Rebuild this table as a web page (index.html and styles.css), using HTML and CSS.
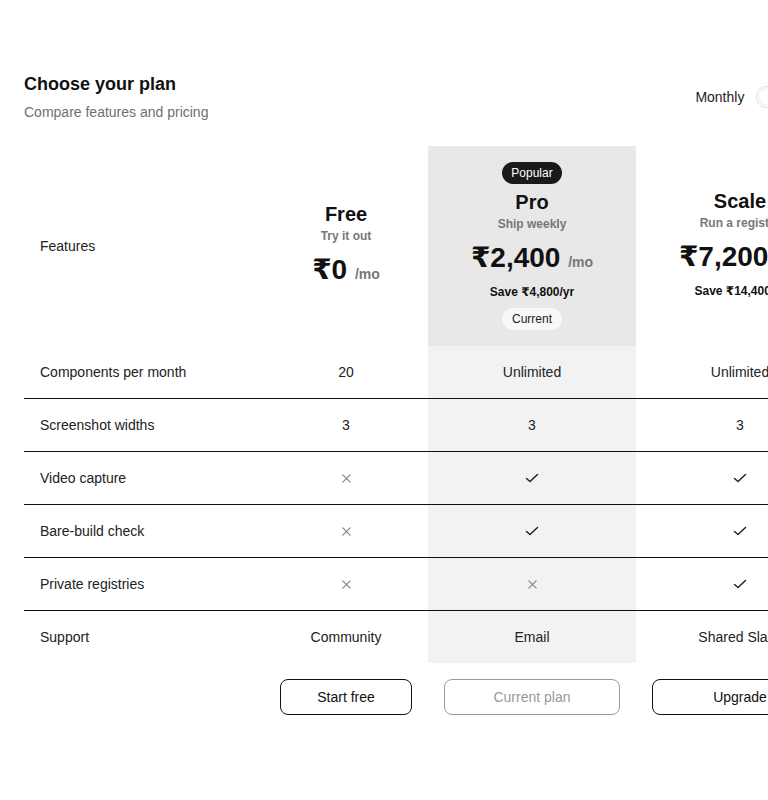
FILE: index.html
```html
<!DOCTYPE html>
<html lang="en">
<head>
<meta charset="utf-8">
<title>Choose your plan</title>
<link rel="stylesheet" href="styles.css">
</head>
<body>
<div class="viewport">
  <main class="page">
    <header class="head">
      <div class="head-text">
        <h1 class="title">Choose your plan</h1>
        <p class="subtitle">Compare features and pricing</p>
      </div>
      <div class="billing">
        <span class="billing-label">Monthly</span>
        <span class="toggle"><span class="knob"></span></span>
        <span class="billing-label">Annual</span>
      </div>
    </header>

    <div class="grid">
      <div class="cell feat head-cell">Features</div>
      <div class="cell plan plan-plain">
        <div class="plan-name">Free</div>
        <div class="plan-tag">Try it out</div>
        <div class="plan-price">₹0 <span class="per">/mo</span></div>
      </div>
      <div class="cell plan pro-head">
        <span class="badge">Popular</span>
        <div class="plan-name">Pro</div>
        <div class="plan-tag">Ship weekly</div>
        <div class="plan-price">₹2,400 <span class="per">/mo</span></div>
        <div class="save">Save ₹4,800/yr</div>
        <span class="current">Current</span>
      </div>
      <div class="cell plan plan-plain">
        <div class="plan-name">Scale</div>
        <div class="plan-tag">Run a registry</div>
        <div class="plan-price">₹7,200 <span class="per">/mo</span></div>
        <div class="save">Save ₹14,400/yr</div>
      </div>

      <div class="cell feat line">Components per month</div>
      <div class="cell val line">20</div>
      <div class="cell val line pro">Unlimited</div>
      <div class="cell val line">Unlimited</div>

      <div class="cell feat line">Screenshot widths</div>
      <div class="cell val line">3</div>
      <div class="cell val line pro">3</div>
      <div class="cell val line">3</div>

      <div class="cell feat line">Video capture</div>
      <div class="cell val line"><svg class="ico no" viewBox="0 0 12 12"><path d="M2 2L10 10M10 2L2 10"/></svg></div>
      <div class="cell val line pro"><svg class="ico yes" viewBox="0 0 14 12"><path d="M1.5 6.5L5 9.5L12.5 2.5"/></svg></div>
      <div class="cell val line"><svg class="ico yes" viewBox="0 0 14 12"><path d="M1.5 6.5L5 9.5L12.5 2.5"/></svg></div>

      <div class="cell feat line">Bare-build check</div>
      <div class="cell val line"><svg class="ico no" viewBox="0 0 12 12"><path d="M2 2L10 10M10 2L2 10"/></svg></div>
      <div class="cell val line pro"><svg class="ico yes" viewBox="0 0 14 12"><path d="M1.5 6.5L5 9.5L12.5 2.5"/></svg></div>
      <div class="cell val line"><svg class="ico yes" viewBox="0 0 14 12"><path d="M1.5 6.5L5 9.5L12.5 2.5"/></svg></div>

      <div class="cell feat line">Private registries</div>
      <div class="cell val line"><svg class="ico no" viewBox="0 0 12 12"><path d="M2 2L10 10M10 2L2 10"/></svg></div>
      <div class="cell val line pro"><svg class="ico no" viewBox="0 0 12 12"><path d="M2 2L10 10M10 2L2 10"/></svg></div>
      <div class="cell val line"><svg class="ico yes" viewBox="0 0 14 12"><path d="M1.5 6.5L5 9.5L12.5 2.5"/></svg></div>

      <div class="cell feat">Support</div>
      <div class="cell val">Community</div>
      <div class="cell val pro">Email</div>
      <div class="cell val">Shared Slack</div>

      <div class="cell"></div>
      <div class="cell btn-cell"><button class="btn">Start free</button></div>
      <div class="cell btn-cell"><button class="btn btn-disabled" disabled>Current plan</button></div>
      <div class="cell btn-cell"><button class="btn">Upgrade</button></div>
    </div>
  </main>
</div>
</body>
</html>
```

FILE: styles.css
```css
html, body {
  margin: 0;
  padding: 0;
  background: #ffffff;
}
body {
  font-family: "Liberation Sans", Arial, "DejaVu Sans", sans-serif;
  color: #111111;
}
.viewport {
  width: 768px;
  overflow: hidden;
}
.page {
  width: 826px;
  padding: 73px 0 60px 24px;
}
.head {
  display: flex;
  justify-content: space-between;
  align-items: center;
}
.title {
  margin: 0;
  font-size: 18px;
  line-height: 22px;
  font-weight: 700;
  color: #111111;
}
.subtitle {
  margin: 8px 0 0;
  font-size: 14px;
  line-height: 18px;
  color: #6f6f6f;
}
.billing {
  display: flex;
  align-items: center;
  gap: 12px;
  font-size: 14px;
  color: #222222;
}
.toggle {
  width: 36px;
  height: 20px;
  border: 1px solid #e4e4e4;
  border-radius: 10px;
  background: #fafafa;
  position: relative;
}
.knob {
  position: absolute;
  left: 2px;
  top: 2px;
  width: 16px;
  height: 16px;
  border-radius: 50%;
  background: #ffffff;
  box-shadow: 0 0 1px rgba(0,0,0,0.2);
}
.grid {
  margin-top: 25px;
  display: grid;
  grid-template-columns: 240px 164px 208px 208px;
  grid-template-rows: 200px repeat(5, 53px) 52px auto;
}
.cell {
  display: flex;
  align-items: center;
  justify-content: center;
  font-size: 14px;
  color: #222222;
}
.feat {
  justify-content: flex-start;
  padding-left: 16px;
}
.line {
  border-bottom: 1px solid #111111;
}
.plan {
  flex-direction: column;
}
.plan-plain {
  padding-bottom: 4px;
}
.pro-head {
  background: #e8e8e8;
}
.pro {
  background: #f2f2f2;
}
.badge {
  background: #1a1a1a;
  color: #ffffff;
  font-size: 12px;
  line-height: 22px;
  height: 22px;
  padding: 0 9px;
  border-radius: 11px;
  margin-bottom: 6px;
}
.plan-name {
  font-size: 20px;
  line-height: 24px;
  height: 24px;
  font-weight: 700;
  color: #111111;
}
.plan-tag {
  margin-top: 2px;
  font-size: 12px;
  line-height: 16px;
  height: 16px;
  font-weight: 700;
  color: #777777;
}
.plan-price {
  margin-top: 9px;
  font-size: 28px;
  line-height: 34px;
  height: 34px;
  font-weight: 700;
  color: #111111;
  white-space: nowrap;
}
.per {
  font-size: 14px;
  font-weight: 700;
  color: #777777;
}
.save {
  margin-top: 9px;
  font-size: 12px;
  line-height: 16px;
  height: 16px;
  font-weight: 700;
  color: #111111;
  white-space: nowrap;
}
.current {
  margin-top: 8px;
  background: #f8f8f8;
  font-size: 12px;
  line-height: 22px;
  height: 22px;
  padding: 0 10px;
  border-radius: 11px;
  color: #222222;
}
.ico {
  fill: none;
  stroke-linecap: round;
  stroke-linejoin: round;
}
.ico.no {
  width: 11px;
  height: 11px;
  stroke: #888888;
  stroke-width: 1.4;
}
.ico.yes {
  width: 14px;
  height: 12px;
  stroke: #222222;
  stroke-width: 1.5;
}
.btn-cell {
  padding: 16px 16px 0;
}
.btn {
  width: 100%;
  height: 36px;
  border: 1px solid #111111;
  border-radius: 8px;
  background: #ffffff;
  font-family: "Liberation Sans", Arial, sans-serif;
  font-size: 14px;
  color: #111111;
  white-space: nowrap;
}
.btn-disabled {
  border-color: #9a9a9a;
  color: #999999;
}
```
